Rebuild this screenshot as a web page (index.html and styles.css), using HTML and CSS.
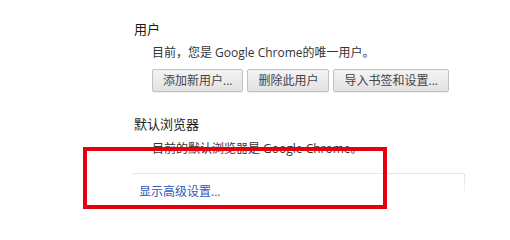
FILE: index.html
```html
<!DOCTYPE html>
<html lang="zh-CN">
<head>
<meta charset="utf-8">
<title>设置</title>
<link rel="stylesheet" href="styles.css">
</head>
<body>
<div class="page">
  <section class="group">
    <h3 class="group-title">用户</h3>
    <div class="group-body">
      <p class="desc">目前，您是 Google Chrome的唯一用户。</p>
      <div class="btn-row">
        <button class="btn" type="button">添加新用户...</button>
        <button class="btn" type="button">删除此用户</button>
        <button class="btn" type="button">导入书签和设置...</button>
      </div>
    </div>
  </section>
  <section class="group group-browser">
    <h3 class="group-title">默认浏览器</h3>
    <div class="group-body">
      <p class="desc">目前的默认浏览器是 Google Chrome。</p>
    </div>
  </section>
  <div class="advanced">
    <a class="advanced-link" href="#">显示高级设置...</a>
  </div>
</div>
<div class="highlight"></div>
</body>
</html>
```

FILE: styles.css
```css
html, body {
  margin: 0;
  padding: 0;
  background: #ffffff;
}

body {
  position: relative;
  font-family: "Open Sans", "Noto Sans CJK SC", sans-serif;
  color: #333333;
  width: 510px;
  height: 220px;
  overflow: hidden;
}

.page {
  padding-left: 134px;
  padding-top: 20px;
}

.group-title {
  margin: 0;
  font-size: 13px;
  line-height: 18px;
  font-weight: normal;
  color: #1a1a1a;
}

.group-body {
  padding-left: 18px;
}

.desc {
  margin: 7px 0 0;
  font-size: 12px;
  line-height: 16px;
  color: #333333;
}

.btn-row {
  display: flex;
  gap: 4px;
  margin-top: 8px;
}

.btn {
  font-family: "Open Sans", "Noto Sans CJK SC", sans-serif;
  font-size: 12px;
  line-height: 16px;
  height: 23px;
  padding: 0 10px;
  color: #444444;
  background: linear-gradient(#f3f3f3, #e2e2e2);
  border: 1px solid #c2c2c2;
  border-radius: 2px;
  box-shadow: 0 1px 0 rgba(0, 0, 0, 0.06);
}

.group-browser {
  margin-top: 23px;
}

.group-browser .desc {
  margin-top: 8px;
}

.advanced {
  position: relative;
  margin-top: 16px;
  margin-left: -1px;
  width: 331px;
  height: 30px;
  border-top: 1px solid #e6e6e6;
  padding: 5px 0 0 6px;
  box-sizing: border-box;
}

.advanced::after {
  content: "";
  position: absolute;
  right: -1px;
  top: 0;
  width: 1px;
  height: 22px;
  background: linear-gradient(#e0e0e0, rgba(224, 224, 224, 0));
}

.advanced-link {
  font-size: 12px;
  line-height: 16px;
  color: #2f58b8;
  text-decoration: none;
}

.highlight {
  position: absolute;
  left: 83px;
  top: 147px;
  width: 304px;
  height: 62px;
  box-sizing: border-box;
  border: 4px solid #e3000f;
}
```
